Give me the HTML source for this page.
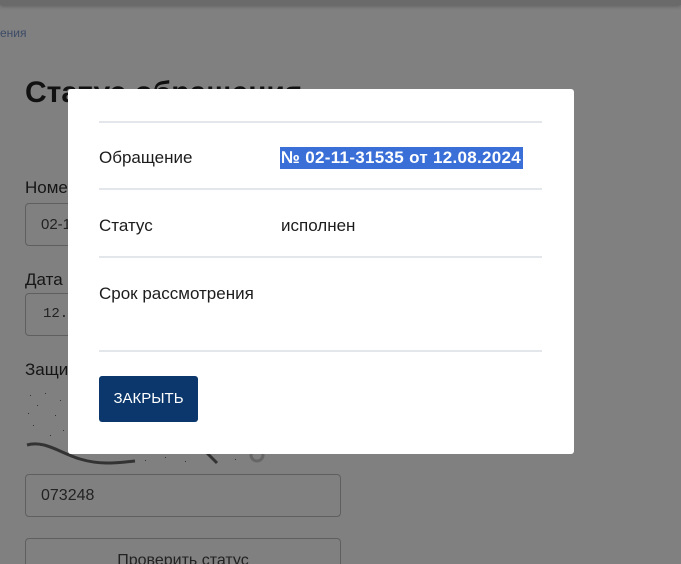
<!DOCTYPE html>
<html><head><meta charset="utf-8"><style>
*{margin:0;padding:0;box-sizing:border-box}
html,body{width:681px;height:564px;overflow:hidden}
body{background:#808080;font-family:"Liberation Sans","DejaVu Sans",sans-serif;position:relative;color:#0c0c0c}
.top{position:absolute;left:0;top:0;width:681px;height:5px;background:#6a6a6a;box-shadow:0 1px 4px rgba(0,0,0,.3)}
.a{position:absolute;white-space:nowrap}
.inp{position:absolute;left:25px;border:1px solid #5f5f5f;border-radius:4px;background:#808080}
.modal{position:absolute;left:68px;top:89px;width:506px;height:365px;background:#fff;border-radius:3px}
.hr{position:absolute;left:31px;width:443px;height:2px;background:#e3e6ea}
.l{position:absolute;left:31px;font-size:17px;color:#1c1c1c}
.v{position:absolute;left:213px;font-size:17px;color:#1c1c1c}
.btn{position:absolute;left:31px;top:287px;width:99px;height:46px;background:#0b376c;border-radius:3px;color:#fff;font-size:15px;text-align:center;line-height:46px}
</style></head><body>
<div class="top"></div>
<div class="a" style="left:0;top:26px;font-size:12px;color:#3c4b66">ения</div>
<div class="a" style="left:25px;top:76px;font-size:30px;font-weight:bold;color:#111">Статус обращения</div>
<div class="a" style="left:25px;top:178px;font-size:17px;color:#151515">Номер</div>
<div class="inp" style="top:203px;width:316px;height:43px"><span class="a" style="left:15px;top:12px;font-size:15px;color:#222">02-11</span></div>
<div class="a" style="left:25px;top:270px;font-size:17px;color:#151515">Дата</div>
<div class="inp" style="top:293px;width:316px;height:43px"><span class="a" style="left:17px;top:12px;font-size:14px;font-family:'Liberation Mono',monospace;color:#222">12.08</span></div>
<div class="a" style="left:25px;top:360px;font-size:17px;color:#151515">Защитный код</div>
<svg class="a" style="left:25px;top:385px" width="250" height="80"><g fill="#333"><rect x="5" y="10" width="1" height="1"/><rect x="12" y="20" width="1" height="1"/><rect x="20" y="8" width="1" height="1"/><rect x="30" y="30" width="1" height="1"/><rect x="8" y="40" width="1" height="1"/><rect x="25" y="50" width="1" height="1"/><rect x="15" y="60" width="1" height="1"/><rect x="35" y="15" width="1" height="1"/><rect x="3" y="28" width="1" height="1"/><rect x="38" y="45" width="1" height="1"/><rect x="120" y="75" width="1" height="1"/><rect x="140" y="72" width="1" height="1"/><rect x="160" y="76" width="1" height="1"/><rect x="210" y="74" width="1" height="1"/></g><path d="M2 60 C20 55 35 68 55 74 S90 78 110 76" stroke="#333" stroke-width="3" fill="none"/><path d="M180 66 l12 12" stroke="#333" stroke-width="3"/><circle cx="232" cy="70" r="6" stroke="#666" stroke-width="3" fill="none"/></svg>
<div class="inp" style="top:474px;width:316px;height:43px"><span class="a" style="left:15px;top:12px;font-size:16px;color:#222">073248</span></div>
<div class="inp" style="top:538px;width:316px;height:43px;text-align:center"><span style="display:block;margin-top:13px;font-size:16px;color:#222">Проверить статус</span></div>
<div class="modal">
<div class="hr" style="top:32px"></div>
<div class="l" style="top:59px">Обращение</div>
<div class="v" style="top:58px;background:#3a6fd8;color:#fff;font-weight:bold;padding:1px 2px 1px 1px;left:212px;letter-spacing:0.3px">№ 02-11-31535 от 12.08.2024</div>
<div class="hr" style="top:99px"></div>
<div class="l" style="top:127px">Статус</div>
<div class="v" style="top:127px">исполнен</div>
<div class="hr" style="top:167px"></div>
<div class="l" style="top:195px">Срок рассмотрения</div>
<div class="hr" style="top:261px"></div>
<div class="btn">ЗАКРЫТЬ</div>
</div>
</body></html>
